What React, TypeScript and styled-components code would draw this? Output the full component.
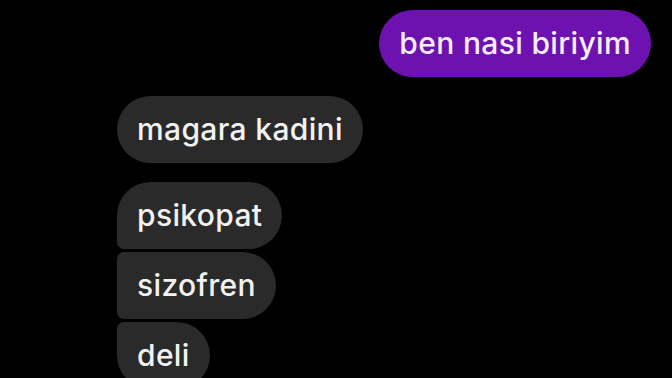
import React from 'react';
import styled, { createGlobalStyle } from 'styled-components';

const GlobalStyle = createGlobalStyle`
  html, body {
    margin: 0;
    padding: 0;
    background: #000;
    overflow: hidden;
  }
`;

const Chat = styled.main`
  width: 672px;
  height: 378px;
  box-sizing: border-box;
  padding: 10px 21px 0 117px;
  display: flex;
  flex-direction: column;
  font-family: Inter, "Noto Sans", sans-serif;
  overflow: hidden;
`;

const Group = styled.div<{ $mine?: boolean }>`
  display: flex;
  flex-direction: column;
  align-items: ${p => (p.$mine ? 'flex-end' : 'flex-start')};
  gap: 3px;
  margin-bottom: 19px;
`;

type Pos = 'single' | 'first' | 'middle' | 'last';

const radius = (pos: Pos) => {
  switch (pos) {
    case 'first':
      return '34px 34px 34px 7px';
    case 'middle':
      return '7px 34px 34px 7px';
    case 'last':
      return '7px 34px 34px 34px';
    default:
      return '34px';
  }
};

const Bubble = styled.div<{ $mine?: boolean; $pos: Pos }>`
  height: 67px;
  box-sizing: border-box;
  padding: 0 20px 2px;
  display: flex;
  align-items: center;
  border-radius: ${p => radius(p.$pos)};
  background: ${p => (p.$mine ? '#6d11b0' : '#2a2a2a')};
  color: ${p => (p.$mine ? '#f6eefb' : '#f2f2f2')};
  font-size: 30px;
  font-weight: 500;
  letter-spacing: 0.35px;
  white-space: nowrap;
`;

const replies = ['psikopat', 'sizofren', 'deli'];

const posOf = (i: number, n: number): Pos =>
  i === 0 ? 'first' : i === n - 1 ? 'last' : 'middle';

export default function App() {
  return (
    <>
      <GlobalStyle />
      <Chat>
        <Group $mine>
          <Bubble $mine $pos="single">ben nasi biriyim</Bubble>
        </Group>
        <Group>
          <Bubble $pos="single">magara kadini</Bubble>
        </Group>
        <Group>
          {replies.map((r, i) => (
            <Bubble key={r} $pos={posOf(i, replies.length)}>
              {r}
            </Bubble>
          ))}
        </Group>
      </Chat>
    </>
  );
}
